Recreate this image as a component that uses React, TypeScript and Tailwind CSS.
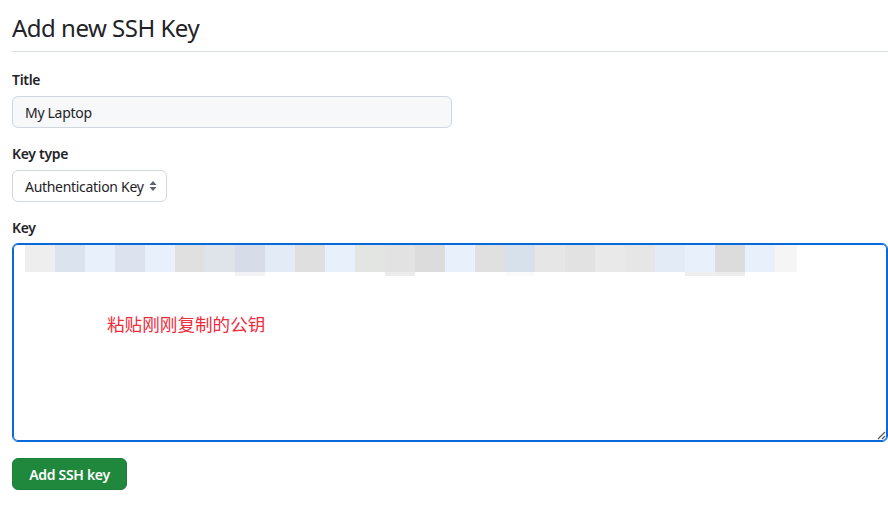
import React from "react";

const blocks: { c: string; u?: string }[] = [
  { c: "#eeeeee" },
  { c: "#dae3ee" },
  { c: "#e8f0fb" },
  { c: "#dce3ee" },
  { c: "#e8f0fb" },
  { c: "#e0e0e0" },
  { c: "#dfe3ea" },
  { c: "#d6dde8", u: "#f3f3f5" },
  { c: "#e3ecf6" },
  { c: "#dfdfdf" },
  { c: "#e8f0fb" },
  { c: "#e3e5e3" },
  { c: "#e2e2e2", u: "#ececec" },
  { c: "#dcdcdc" },
  { c: "#e8f0fb" },
  { c: "#e0e0e0" },
  { c: "#d6e1ec", u: "#fbfbfb" },
  { c: "#e6e6e6" },
  { c: "#e2e2e2" },
  { c: "#e9e9e9" },
  { c: "#e6e6e6" },
  { c: "#e3ebf6" },
  { c: "#e8f0fb", u: "#efefef" },
  { c: "#dcdcdc", u: "#ececec" },
  { c: "#e8f0fb" },
  { c: "#f5f5f5" },
];

export default function App() {
  return (
    <div
      className="w-[888px] h-[506px] bg-white overflow-hidden text-[#1f2328] tracking-[-0.3px]"
      style={{ fontFamily: '"Noto Sans", "Liberation Sans", "Noto Sans CJK SC", sans-serif' }}
    >
      <div className="pl-3 pt-[10px]">
        <h1 className="text-[24px] leading-[36px] font-normal pb-[5px] border-b border-[#d8dee4] tracking-[-0.5px]">
          Add new SSH Key
        </h1>
        <div className="mt-[18px] text-[14px] font-semibold leading-[20px]">Title</div>
        <div className="mt-[6px] w-[440px] h-[32px] rounded-[6px] border border-[#d0d7de] bg-[#f6f8fa] flex items-center px-3 text-[14px]">
          My Laptop
        </div>
        <div className="mt-[16px] text-[14px] font-semibold leading-[20px]">Key type</div>
        <div className="mt-[6px] w-[155px] h-[32px] rounded-[6px] border border-[#d0d7de] bg-white flex items-center pl-3 pr-2 text-[14px] justify-between">
          <span>Authentication Key</span>
          <svg width="8" height="12" viewBox="0 0 8 12" className="mr-[1px]">
            <path d="M4 1 L7.5 5 H0.5 Z" fill="#59636e" />
            <path d="M4 11 L7.5 7 H0.5 Z" fill="#59636e" />
          </svg>
        </div>
        <div className="mt-[16px] text-[14px] font-semibold leading-[20px]">Key</div>
        <div className="relative mt-[5px] h-[199px] rounded-[6px] border border-[#0969da] shadow-[inset_0_0_0_1px_#0969da] bg-white">
          <div className="flex pl-[12px] pt-[1px]">
            {blocks.map((b, i) => (
              <div key={i} className="flex flex-col">
                <div className={i === blocks.length - 1 ? "w-[22px] h-[27px]" : "w-[30px] h-[27px]"} style={{ background: b.c }} />
                <div className="w-[30px] h-[4px]" style={{ background: b.u ?? "transparent" }} />
              </div>
            ))}
          </div>
          <div className="ml-[94px] mt-[36px] text-[17.6px] leading-[24px] tracking-normal text-[#ee2c3c]">
            粘贴刚刚复制的公钥
          </div>
          <svg width="10" height="10" viewBox="0 0 10 10" className="absolute right-[1px] bottom-[1px]">
            <path d="M9 2 L2 9 M9 6 L6 9" stroke="#555" strokeWidth="1.2" />
          </svg>
        </div>
        <button className="mt-[16px] w-[115px] h-[32px] rounded-[6px] bg-[#1f883d] border border-[#1a7f37] text-white text-[14px] font-semibold flex items-center justify-center">
          Add SSH key
        </button>
      </div>
    </div>
  );
}
